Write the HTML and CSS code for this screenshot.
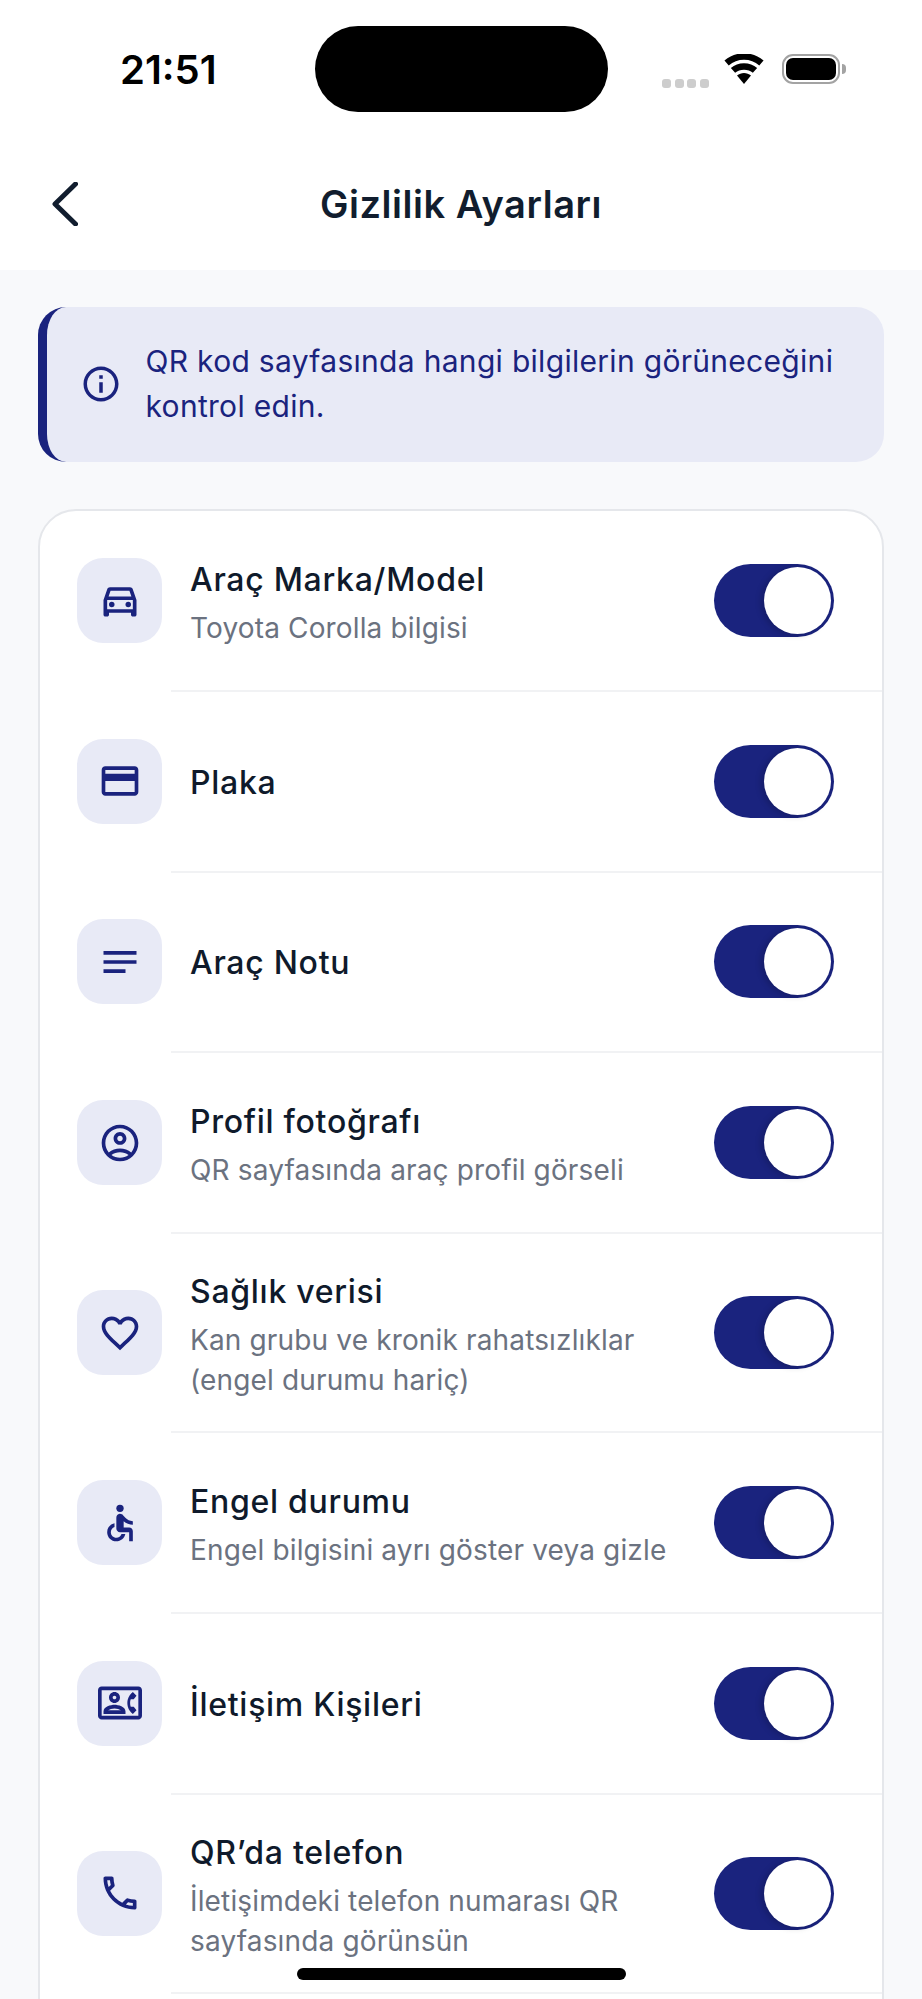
FILE: index.html
```html
<!DOCTYPE html>
<html lang="tr">
<head>
<meta charset="utf-8">
<title>Gizlilik Ayarları</title>
<link rel="stylesheet" href="styles.css">
</head>
<body>
<div class="screen">
  <header class="top">
    <div class="status">
      <span class="time">21:51</span>
      <span class="island"></span>
      <div class="status-right">
        <span class="dots"><i></i><i></i><i></i><i></i></span>
        <svg class="wifi" viewBox="0 0 40 30"><path d="M20 30 L13 21.5 C17 18 23 18 27 21.5 Z"/><path d="M9 16.4 C15 11.2 25 11.2 31 16.4" class="arc"/><path d="M2.6 9 C12.5 0.4 27.5 0.4 37.4 9" class="arc"/></svg>
        <span class="battery"><span class="battery-fill"></span></span>
        <span class="battery-tip"></span>
      </div>
    </div>
    <nav class="nav">
      <svg class="back" viewBox="0 0 26 44"><path d="M23.5 2 L3 22 L23.5 42" /></svg>
      <h1 class="title">Gizlilik Ayarları</h1>
      <span></span>
    </nav>
  </header>
  <main class="content">
    <div class="banner">
      <svg class="info" viewBox="0 0 24 24"><path d="M11 7h2v2h-2zm0 4h2v6h-2zm1-9C6.48 2 2 6.48 2 12s4.48 10 10 10 10-4.48 10-10S17.52 2 12 2zm0 18c-4.41 0-8-3.59-8-8s3.59-8 8-8 8 3.59 8 8-3.59 8-8 8z"/></svg>
      <p class="banner-text">QR kod sayfasında hangi bilgilerin görüneceğini kontrol edin.</p>
    </div>
    <section class="card">
      <div class="row">
        <span class="icon-box"><svg viewBox="0 0 24 24"><path d="M18.92 6.01C18.72 5.42 18.16 5 17.5 5h-11c-.66 0-1.21.42-1.42 1.01L3 12v8c0 .55.45 1 1 1h1c.55 0 1-.45 1-1v-1h12v1c0 .55.45 1 1 1h1c.55 0 1-.45 1-1v-8l-2.08-5.99zM6.85 7h10.29l1.08 3.11H5.77L6.85 7zM19 17H5v-5h14v5z"/><circle cx="7.5" cy="14.5" r="1.5"/><circle cx="16.5" cy="14.5" r="1.5"/></svg></span>
        <div class="row-text"><div class="row-title">Araç Marka/Model</div><div class="row-sub">Toyota Corolla bilgisi</div></div>
        <span class="toggle"><span class="knob"></span></span>
      </div>
      <div class="divider"></div>
      <div class="row">
        <span class="icon-box"><svg viewBox="0 0 24 24"><path d="M20 4H4c-1.11 0-1.99.89-1.99 2L2 18c0 1.11.89 2 2 2h16c1.11 0 2-.89 2-2V6c0-1.11-.89-2-2-2zm0 14H4v-6h16v6zm0-10H4V6h16v2z"/></svg></span>
        <div class="row-text"><div class="row-title">Plaka</div></div>
        <span class="toggle"><span class="knob"></span></span>
      </div>
      <div class="divider"></div>
      <div class="row">
        <span class="icon-box"><svg viewBox="0 0 24 24"><path d="M21 11.01L3 11v2h18zM3 16h12v2H3zM21 6H3v2.01L21 8z"/></svg></span>
        <div class="row-text"><div class="row-title">Araç Notu</div></div>
        <span class="toggle"><span class="knob"></span></span>
      </div>
      <div class="divider"></div>
      <div class="row">
        <span class="icon-box"><svg viewBox="0 0 24 24"><path d="M12 2C6.48 2 2 6.48 2 12s4.48 10 10 10 10-4.48 10-10S17.52 2 12 2zM7.35 18.5C8.66 17.56 10.26 17 12 17s3.34.56 4.65 1.5C15.34 19.44 13.74 20 12 20s-3.34-.56-4.65-1.5zm10.79-1.38C16.45 15.8 14.32 15 12 15s-4.45.8-6.14 2.12C4.7 15.73 4 13.95 4 12c0-4.42 3.58-8 8-8s8 3.58 8 8c0 1.95-.7 3.73-1.86 5.12z"/><path d="M12 6c-1.93 0-3.5 1.57-3.5 3.5S10.07 13 12 13s3.5-1.57 3.5-3.5S13.93 6 12 6zm0 5c-.83 0-1.5-.67-1.5-1.5S11.17 8 12 8s1.5.67 1.5 1.5S12.83 11 12 11z"/></svg></span>
        <div class="row-text"><div class="row-title">Profil fotoğrafı</div><div class="row-sub">QR sayfasında araç profil görseli</div></div>
        <span class="toggle"><span class="knob"></span></span>
      </div>
      <div class="divider"></div>
      <div class="row">
        <span class="icon-box"><svg viewBox="0 0 24 24"><path d="M16.5 3c-1.74 0-3.41.81-4.5 2.09C10.91 3.81 9.24 3 7.5 3 4.42 3 2 5.42 2 8.5c0 3.78 3.4 6.86 8.55 11.54L12 21.35l1.45-1.32C18.6 15.36 22 12.28 22 8.5 22 5.42 19.58 3 16.5 3zm-4.4 15.55l-.1.1-.1-.1C7.14 14.24 4 11.39 4 8.5 4 6.5 5.5 5 7.5 5c1.54 0 3.04.99 3.57 2.36h1.87C13.46 5.99 14.96 5 16.5 5c2 0 3.5 1.5 3.5 3.5 0 2.89-3.14 5.74-7.9 10.05z"/></svg></span>
        <div class="row-text"><div class="row-title">Sağlık verisi</div><div class="row-sub">Kan grubu ve kronik rahatsızlıklar<br>(engel durumu hariç)</div></div>
        <span class="toggle"><span class="knob"></span></span>
      </div>
      <div class="divider"></div>
      <div class="row">
        <span class="icon-box"><svg viewBox="0 0 24 24"><circle cx="12" cy="4" r="2"/><path d="M19 13v-2c-1.54.02-3.09-.75-4.07-1.83l-1.29-1.43c-.17-.19-.38-.34-.61-.45-.01 0-.01-.01-.02-.01H13c-.35-.2-.75-.3-1.19-.26C10.76 7.11 10 8.04 10 9.09V15c0 1.1.9 2 2 2h5v5h2v-5.5c0-1.1-.9-2-2-2h-3v-3.45c1.29 1.07 3.25 1.94 5 1.95zm-6.17 5c-.41 1.16-1.52 2-2.83 2-1.66 0-3-1.34-3-3 0-1.31.84-2.41 2-2.83V12.1c-2.28.46-4 2.48-4 4.9 0 2.76 2.24 5 5 5 2.42 0 4.44-1.72 4.9-4h-2.07z"/></svg></span>
        <div class="row-text"><div class="row-title">Engel durumu</div><div class="row-sub">Engel bilgisini ayrı göster veya gizle</div></div>
        <span class="toggle"><span class="knob"></span></span>
      </div>
      <div class="divider"></div>
      <div class="row">
        <span class="icon-box"><svg viewBox="0 0 24 24"><path d="M22 3H2C.9 3 0 3.9 0 5v14c0 1.1.9 2 2 2h20c1.1 0 1.99-.9 1.99-2L24 5c0-1.1-.9-2-2-2zm0 16H2V5h20v14zm-2.99-1.01L21 16l-1.51-2h-1.64c-.22-.63-.35-1.3-.35-2s.13-1.37.35-2h1.64L21 8l-1.99-1.99c-1.31.98-2.28 2.37-2.73 3.99-.18.64-.28 1.31-.28 2s.1 1.36.28 2c.45 1.61 1.43 3.01 2.73 3.99zM9 12c1.65 0 3-1.35 3-3s-1.35-3-3-3-3 1.35-3 3 1.35 3 3 3zm0-4c.55 0 1 .45 1 1s-.45 1-1 1-1-.45-1-1 .45-1 1-1zm6 8.59c0-2.5-3.97-3.58-6-3.58s-6 1.08-6 3.58V18h12v-1.41zM5.48 16c.74-.5 2.22-1 3.52-1s2.77.49 3.52 1H5.48z"/></svg></span>
        <div class="row-text"><div class="row-title">İletişim Kişileri</div></div>
        <span class="toggle"><span class="knob"></span></span>
      </div>
      <div class="divider"></div>
      <div class="row">
        <span class="icon-box"><svg viewBox="0 0 24 24"><path d="M6.54 5c.06.89.21 1.76.45 2.59l-1.2 1.2c-.41-1.2-.67-2.47-.76-3.79h1.51m9.86 12.02c.85.24 1.72.39 2.6.45v1.49c-1.32-.09-2.59-.35-3.8-.75l1.2-1.19M7.5 3H4c-.55 0-1 .45-1 1 0 9.39 7.61 17 17 17 .55 0 1-.45 1-1v-3.49c0-.55-.45-1-1-1-1.24 0-2.45-.2-3.57-.57-.1-.04-.21-.05-.31-.05-.26 0-.51.1-.71.29l-2.2 2.2c-2.83-1.45-5.15-3.76-6.59-6.59l2.2-2.2c.28-.28.36-.67.25-1.02C8.7 6.45 8.5 5.25 8.5 4c0-.55-.45-1-1-1z"/></svg></span>
        <div class="row-text"><div class="row-title">QR’da telefon</div><div class="row-sub">İletişimdeki telefon numarası QR<br>sayfasında görünsün</div></div>
        <span class="toggle"><span class="knob"></span></span>
      </div>
      <div class="divider"></div>
    </section>
  </main>
  <div class="home-indicator"></div>
</div>
</body>
</html>
```
FILE: styles.css
```css
* { box-sizing: border-box; }
html, body { margin: 0; padding: 0; height: 1999px; overflow: hidden; }
body { font-family: "Inter", "Noto Sans", sans-serif; background: #f8f9fb; color: #111d2e; }
.screen { position: relative; height: 1999px; overflow: hidden; }

.top { background: #fff; height: 270px; }
.status { height: 138px; padding: 26px 0 0 120px; display: flex; align-items: flex-start; }
.time { width: 195px; height: 86px; display: flex; align-items: center; font: 600 40px "Inter", sans-serif; color: #000; }
.island { width: 293px; height: 86px; background: #000; border-radius: 43px; }
.status-right { margin-left: 54px; height: 86px; display: flex; align-items: center; }
.dots { display: flex; gap: 3.5px; margin-top: 29px; margin-right: 15.5px; }
.dots i { width: 9px; height: 9px; background: #cdcdcd; border-radius: 3px; }
.wifi { width: 40px; height: 30px; margin-right: 18px; }
.wifi path { fill: #000; }
.wifi .arc { fill: none; stroke: #000; stroke-width: 6.5; }
.battery { width: 58px; height: 30px; border: 2.5px solid #a3a3a3; border-radius: 11px; padding: 2px; display: flex; }
.battery-fill { flex: 1; background: #000; border-radius: 7px; }
.battery-tip { width: 4px; height: 10px; margin-left: 2px; background: #a3a3a3; border-radius: 0 4px 4px 0; }

.nav { height: 132px; display: grid; grid-template-columns: 1fr auto 1fr; align-items: center; padding: 0 0 0 52px; }
.back { width: 26px; height: 44px; fill: none; stroke: #111d2e; stroke-width: 5; stroke-linecap: round; stroke-linejoin: round; }
.title { margin: 0 0 0 -52px; font-size: 38px; font-weight: 580; letter-spacing: 0.55px; line-height: 48px; color: #111d2e; }

.content { padding: 37px 38px 0 37.5px; }
.banner { display: flex; align-items: center; gap: 24px; background: #e8eaf6; border-left: 9px solid #1a237e; border-radius: 28px; padding: 32px 30px 33px 33px; }
.info { width: 42px; height: 42px; fill: #1a237e; flex: none; }
.banner-text { margin: 0; font-size: 30px; line-height: 45px; letter-spacing: 0.3px; color: #1a237e; }

.card { margin-top: 47px; background: #fff; border: 2.5px solid #e5e7eb; border-radius: 38px; padding-bottom: 40px; }
.row { display: flex; align-items: center; min-height: 178.8px; padding: 31px 48px 31px 37.5px; }
.divider { height: 2px; margin-left: 131px; background: #f1f2f4; }
.icon-box { width: 85px; height: 85px; flex: none; background: #e8eaf6; border-radius: 26px; display: flex; align-items: center; justify-content: center; }
.icon-box svg { width: 44px; height: 44px; fill: #1a237e; }
.row-text { flex: 1; margin-left: 28px; min-width: 0; padding-top: 3px; }
.row-title { font-size: 32px; font-weight: 450; letter-spacing: 0.72px; line-height: 48px; color: #0f1a2b; }
.row-sub { margin-top: 4px; font-size: 28px; letter-spacing: 0.15px; line-height: 40px; color: #6b7280; }
.toggle { width: 120px; height: 73px; flex: none; background: #1a237e; border-radius: 37px; display: flex; align-items: center; justify-content: flex-end; padding-right: 3px; }
.knob { width: 67px; height: 67px; background: #fff; border-radius: 50%; box-shadow: -3px 1px 6px rgba(0, 0, 0, 0.18); }

.home-indicator { position: absolute; left: 297px; top: 1968px; width: 329px; height: 12px; background: #000; border-radius: 6px; }
```
